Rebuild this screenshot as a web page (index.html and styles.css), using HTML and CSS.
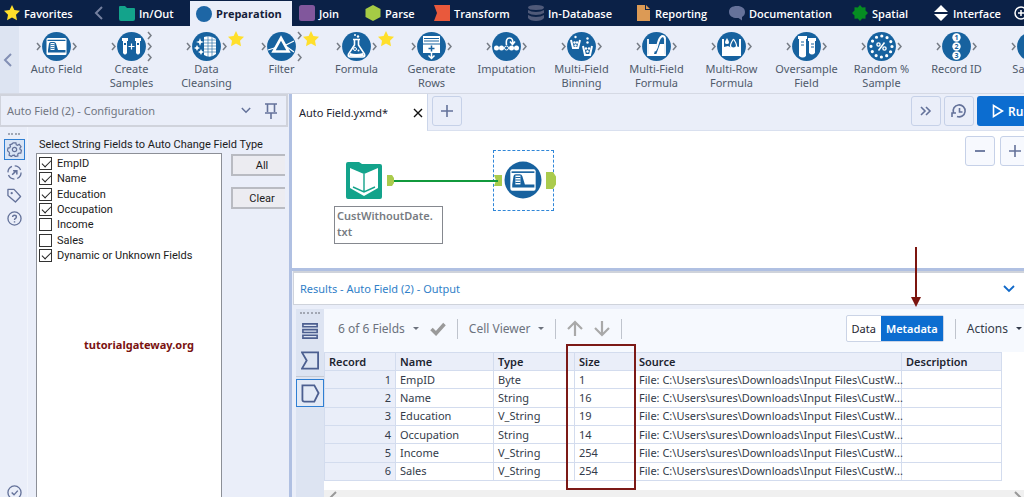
FILE: index.html
```html
<!DOCTYPE html>
<html lang="en">
<head>
    <meta charset="UTF-8">
    <meta name="viewport" content="width=device-width, initial-scale=1.0">
    <title>Auto Field.yxmd</title>
    <link rel="stylesheet" href="styles.css">
</head>
<body>
    <!-- shared shapes -->
    <svg class="defs" aria-hidden="true">
        <symbol id="star" viewBox="0 0 16 16"><path fill="#ffdf2b" d="M8 0l2.400 5 5.600.8-4 3.900 1 5.600-5-2.700-5 2.700 1-5.600-4-3.900 5.600-.8z"/></symbol>
        <symbol id="disc" viewBox="0 0 75 31">
            <circle cx="37.500" cy="15.500" r="14.400" fill="#17629f"/>
            <path d="M18 12l3 3.500-3 3.500" fill="none" stroke="#777c85" stroke-width="1.500"/>
        </symbol>
        <symbol id="out" viewBox="0 0 75 31"><path d="M54 12l3 3.500-3 3.500" fill="none" stroke="#777c85" stroke-width="1.500"/></symbol>
        <symbol id="out2" viewBox="0 0 75 31"><path d="M54 1l3 3.500-3 3.500M54 23l3 3.500-3 3.500" fill="none" stroke="#777c85" stroke-width="1.500"/></symbol>
        <symbol id="autofield" viewBox="0 0 30 30">
            <rect x="5" y="6.500" width="20" height="17" rx="1.500" fill="#fff"/>
            <path d="M6 8.800h18" stroke="#17629f" stroke-width="1.300"/>
            <path fill="#17629f" d="M6.500 21V18.500L7.500 12q.3-1.500 1.800-1.500h3.200q1.500 0 2 1.500l2 6.500H24V21z"/>
            <path fill="#fff" d="M9 11.500h4v7H9z"/>
            <path d="M9 13h4M9 15h4M9 17h4" stroke="#17629f" stroke-width=".8"/>
        </symbol>
    </svg>

    <nav class="palette">
        <button class="palette-tab"><svg class="icon" viewBox="0 0 16 16"><use href="#star"/></svg>Favorites</button>
        <button class="palette-back" aria-label="Previous"><svg width="9" height="14" viewBox="0 0 9 14"><path d="M8 1L2 7l6 6" fill="none" stroke="#75809f" stroke-width="2"/></svg></button>
        <button class="palette-tab"><svg class="icon" viewBox="0 0 16 16"><path fill="#13a38b" d="M0 2q0-1 1-1h5l2 2h7q1 0 1 1v10q0 2-2 2H2q-2 0-2-2z"/></svg>In/Out</button>
        <button class="palette-tab active"><svg class="icon" viewBox="0 0 16 16"><circle cx="8" cy="8" r="8" fill="#1d66a5"/></svg>Preparation</button>
        <button class="palette-tab"><svg class="icon" viewBox="0 0 16 16"><rect width="16" height="16" rx="2.500" fill="#81579c"/></svg>Join</button>
        <button class="palette-tab"><svg class="icon" viewBox="0 0 16 16"><path fill="#a5cb45" d="M8 0l7.500 4v8L8 16 .5 12V4z"/></svg>Parse</button>
        <button class="palette-tab"><svg class="icon" viewBox="0 0 16 16"><path fill="#e9593c" d="M0 0h16v16H0l3-8z"/></svg>Transform</button>
        <button class="palette-tab"><svg class="icon" viewBox="0 0 16 16"><g fill="#505a79"><path d="M0 2.500q0-2.500 8-2.500t8 2.500-8 2.500-8-2.500"/><path d="M0 5q3 2 8 2t8-2v3q-3 2-8 2T0 8z"/><path d="M0 10q3 2 8 2t8-2v3q-2 3-8 3t-8-3z"/></g></svg>In-Database</button>
        <button class="palette-tab"><svg class="icon" viewBox="0 0 16 16"><path fill="#dc9a55" d="M2 0h8v5h5v11H2z"/><path fill="#dc9a55" d="M11 0l4 4h-4z"/></svg>Reporting</button>
        <button class="palette-tab"><svg class="icon" viewBox="0 0 16 16"><path fill="#66729a" d="M8 1c5 0 8 2.500 8 6 0 2-1 4-3 5v3.500L9.500 13C4 13.500 0 11 0 7s3-6 8-6"/></svg>Documentation</button>
        <button class="palette-tab"><svg class="icon" viewBox="0 0 16 16"><path fill="#068d22" d="M8 0l2.200 2.500 3.300-.3v3.300L16 8l-2.500 2.500v3.300l-3.300-.3L8 16l-2.200-2.500-3.300.3v-3.300L0 8l2.500-2.500V2.200l3.300.3z"/></svg>Spatial</button>
        <button class="palette-tab"><svg class="icon" viewBox="0 0 16 16"><path fill="#fff" d="M8 0l7 7H1zM8 16l7-7H1z"/></svg>Interface</button>
        <button class="palette-tab" aria-label="Add"><svg class="icon" viewBox="0 0 16 16"><circle cx="8" cy="8" r="6" fill="none" stroke="#fff" stroke-width="1.500"/><path d="M5 8h6M8 5v6" stroke="#fff" stroke-width="1.500"/></svg></button>
    </nav>

    <div class="tools">
        <button class="tools-prev" aria-label="Scroll left"><svg width="9" height="14" viewBox="0 0 9 14"><path d="M8 1L2 7l6 6" fill="none" stroke="#8390b5" stroke-width="2"/></svg></button>
        <button class="tool">
            <svg class="tool-icon" viewBox="0 0 75 31"><use href="#disc"/><use href="#out"/><use href="#autofield" x="22.500" y="0.500" width="30" height="30"/></svg>
            Auto Field
        </button>
        <button class="tool">
            <svg class="tool-icon" viewBox="0 0 75 31"><use href="#disc"/><use href="#out"/><use href="#out2"/>
                <path fill="#fff" d="M28 7h6v3h-6zM29 10h4v12q-2 3-4 0zM41 7h6v3h-6zM42 10h4v12q-2 3-4 0z"/>
                <path d="M34.500 15.500h6M37.500 12.500v6" stroke="#fff" stroke-width="1.200"/><path d="M30 13h2M43 13h2" stroke="#17629f" stroke-width="2"/></svg>
            Create Samples
        </button>
        <button class="tool">
            <svg class="tool-icon" viewBox="0 0 75 31"><use href="#disc"/><use href="#out"/><use href="#star" x="59" y="0" width="16" height="16"/>
                <path fill="#fff" d="M35 6q7-2 12 2v15q-6 5-12 1z"/>
                <path d="M35 9h12M35 12h12M35 15h12M35 18h12M35 21h12M39 5v21M43 6v20" stroke="#17629f" stroke-width=".6"/>
                <path fill="#fff" d="M31 7l1 3 3 1-3 1-1 3-1-3-3-1 3-1zM28 14l1 2 2 1-2 1-1 2-1-2-2-1 2-1zM32 18l1 2 2 1-2 1-1 2-1-2-2-1 2-1z"/></svg>
            Data Cleansing
        </button>
        <button class="tool">
            <svg class="tool-icon" viewBox="0 0 75 31"><use href="#disc"/><use href="#out2"/><use href="#star" x="59" y="0" width="16" height="16"/>
                <path d="M37 7l7.500 13.500h-15z" fill="none" stroke="#fff" stroke-width="2.600"/>
                <path d="M24 19l8-2.500M42 14l8-4M43 16l7 5" stroke="#fff" stroke-width="1.300"/></svg>
            Filter
        </button>
        <button class="tool">
            <svg class="tool-icon" viewBox="0 0 75 31"><use href="#disc"/><use href="#out"/><use href="#star" x="59" y="0" width="16" height="16"/>
                <path d="M34 8.500h7M35.500 9v5l-6 9q-1 3 2 3h12q3 0 2-3l-6-9V9" fill="none" stroke="#fff" stroke-width="1.600"/>
                <path fill="#fff" d="M31 22q6 2 13 0l1 3q-7 2-15 0z"/><circle cx="36" cy="18" r="1.500" fill="none" stroke="#fff"/><circle cx="39.500" cy="19.500" r="1" fill="#fff"/><circle cx="36" cy="4" r="1" fill="#fff"/><circle cx="39" cy="5.500" r="1.200" fill="#fff"/></svg>
            Formula
        </button>
        <button class="tool">
            <svg class="tool-icon" viewBox="0 0 75 31"><use href="#disc"/><use href="#out"/>
                <path fill="#fff" d="M29 5h17v17H29z"/><path d="M30 7.500h15M30 10h15M29 13h17" stroke="#17629f" stroke-width="1"/><path d="M34.500 17.500h6M37.500 14.500v6" stroke="#17629f" stroke-width="1.500"/>
                <path d="M37.500 22v5M34.500 24.500l3 3 3-3" fill="none" stroke="#fff" stroke-width="1.500"/></svg>
            Generate Rows
        </button>
        <button class="tool">
            <svg class="tool-icon" viewBox="0 0 75 31"><use href="#disc"/><use href="#out"/>
                <g fill="#fff"><circle cx="27.500" cy="17" r="2.500"/><circle cx="32.500" cy="17" r="2.500"/><circle cx="42.500" cy="17" r="2.500"/><circle cx="47.500" cy="17" r="2.500"/></g>
                <circle cx="37.500" cy="17" r="2" fill="none" stroke="#fff"/>
                <path d="M37.500 14q-1-7 3-7t3 6M41 10.500l2.500 3 2.500-3" fill="none" stroke="#fff" stroke-width="1.600"/></svg>
            Imputation
        </button>
        <button class="tool">
            <svg class="tool-icon" viewBox="0 0 75 31"><use href="#disc"/><use href="#out"/>
                <path d="M27 9l2 8h5l2-8M39 15l2 9h5l2-9" fill="none" stroke="#fff" stroke-width="2"/>
                <g fill="#fff"><circle cx="30.500" cy="11.500" r="1.200"/><circle cx="33" cy="11.500" r="1.200"/><circle cx="31.500" cy="14.500" r="1.200"/><circle cx="31.500" cy="6" r="1.200"/><circle cx="42" cy="17.500" r="1.200"/><circle cx="45" cy="17.500" r="1.200"/><circle cx="43.500" cy="20.500" r="1.200"/><circle cx="43.500" cy="11.500" r="1.200"/><circle cx="43.500" cy="7.500" r="1.200"/></g></svg>
            Multi-Field Binning
        </button>
        <button class="tool">
            <svg class="tool-icon" viewBox="0 0 75 31"><use href="#disc"/><use href="#out"/>
                <path d="M29 8v16h17V8" fill="none" stroke="#fff" stroke-width="1.800"/><path fill="#fff" d="M30 13h8l-3 10h-5zM41 13h4v11h-8z"/>
                <path d="M36 20q2-3 3-8t4-7q3 0 3 3" fill="none" stroke="#fff" stroke-width="2"/></svg>
            Multi-Field Formula
        </button>
        <button class="tool">
            <svg class="tool-icon" viewBox="0 0 75 31"><use href="#disc"/><use href="#out"/>
                <path fill="#fff" d="M28 8h2v8l4-1 4 2 4-2 3 1V8h2v17H28z"/><path fill="#fff" d="M33 7q4 6 0 6t0-6"/><path d="M39.500 8q6 9 0 9t0-9" fill="#17629f" stroke="#fff" stroke-width="1.200"/></svg>
            Multi-Row Formula
        </button>
        <button class="tool">
            <svg class="tool-icon" viewBox="0 0 75 31"><use href="#disc"/><use href="#out"/>
                <path fill="#fff" d="M29 5h9v3h-9zM30 8h7v17q-3 3-7 0zM39 7h8v3h-8zM40 10h6v12q-3 3-6 0z"/><path d="M32 11h3M32 14h3M42 13h3M42 16h3" stroke="#17629f" stroke-width="1.200"/></svg>
            Oversample Field
        </button>
        <button class="tool">
            <svg class="tool-icon" viewBox="0 0 75 31"><use href="#disc"/><use href="#out"/>
                <circle cx="37.500" cy="15.500" r="10.500" fill="none" stroke="#fff" stroke-width="3.200" stroke-linecap="round" stroke-dasharray="0 5.498"/>
                <path d="M34.500 19.500l6-8" stroke="#fff" stroke-width="1.500"/><circle cx="34.500" cy="13.500" r="1.600" fill="none" stroke="#fff" stroke-width="1.400"/><circle cx="40.500" cy="17.500" r="1.600" fill="none" stroke="#fff" stroke-width="1.400"/></svg>
            Random % Sample
        </button>
        <button class="tool">
            <svg class="tool-icon" viewBox="0 0 75 31"><use href="#disc"/><use href="#out"/>
                <g fill="#fff"><circle cx="37.500" cy="6.500" r="4.200"/><circle cx="37.500" cy="15.500" r="4.200"/><circle cx="37.500" cy="24.500" r="4.200"/></g>
                <g class="id-digits"><text x="37.500" y="9">1</text><text x="37.500" y="18">2</text><text x="37.500" y="27">3</text></g></svg>
            Record ID
        </button>
        <button class="tool">
            <svg class="tool-icon" viewBox="0 0 75 31"><use href="#disc"/></svg>
            Sample
        </button>
    </div>

    <div class="workspace">
        <aside class="config">
            <header class="config-head">
                <h2>Auto Field (2) - Configuration</h2>
                <button aria-label="Collapse"><svg width="10" height="7" viewBox="0 0 12 8"><path d="M1 1l5 5 5-5" fill="none" stroke="#64729a" stroke-width="1.800"/></svg></button>
                <button aria-label="Pin"><svg width="14" height="16" viewBox="0 0 14 16"><path d="M1 1h12M3.500 1v8M10.500 1v8M1 10h12M7 10v6" fill="none" stroke="#64729a" stroke-width="1.600"/></svg></button>
            </header>
            <div class="config-body">
                <div class="config-rail">
                    <span class="grip"></span>
                    <button class="selected" aria-label="Configuration"><svg viewBox="0 0 16 16"><path d="M6.500 1h3l.4 2 1.500.6L13 2.500 15 5l-1.300 1.600.3 1.400 1.500.8-.8 3-2 .1-1.200 1 .1 2-3 .6L8 14l-2 .3-1.300 1.200-2.500-1.500.5-2L2 10.500.5 9.500l.5-3 2-.4.7-1.400L3 3l2.500-1z" fill="none" stroke="#64729a" stroke-width="1.300"/><circle cx="8" cy="8" r="2.300" fill="none" stroke="#64729a" stroke-width="1.300"/></svg></button>
                    <button aria-label="Navigation"><svg viewBox="0 0 16 16"><circle cx="8" cy="8" r="7" fill="none" stroke="#64729a" stroke-width="1.400" stroke-dasharray="8 3"/><path d="M5.500 10.500l4.500-4.500M6.500 6h4v4" fill="none" stroke="#64729a" stroke-width="1.600"/></svg></button>
                    <button aria-label="Annotation"><svg viewBox="0 0 16 16"><path d="M1 1.500h6.500l7 7.500-5.500 6L1 8z" fill="none" stroke="#64729a" stroke-width="1.400" stroke-linejoin="round"/><circle cx="5" cy="5.500" r="1.200" fill="#64729a"/></svg></button>
                    <button aria-label="Help"><svg viewBox="0 0 16 16"><circle cx="8" cy="8" r="7" fill="none" stroke="#64729a" stroke-width="1.400"/><path d="M6 6.500q0-2 2-2t2 1.800q0 1-1 1.500T8 9.500M8 10.800v1.400" fill="none" stroke="#64729a" stroke-width="1.500"/></svg></button>
                    <button class="status" aria-label="Status"><svg viewBox="0 0 16 16"><circle cx="8" cy="8" r="7" fill="none" stroke="#64729a" stroke-width="1.400"/><path d="M5 8l2.500 2.500L11.500 6" fill="none" stroke="#64729a" stroke-width="1.500"/></svg></button>
                </div>
                <div class="config-form">
                    <h3 id="fields-title">Select String Fields to Auto Change Field Type</h3>
                    <div class="config-row">
                        <div class="field-box" role="group" aria-labelledby="fields-title">
                            <div class="field-list">
                                <label><input type="checkbox" checked>EmpID</label>
                                <label><input type="checkbox" checked>Name</label>
                                <label><input type="checkbox" checked>Education</label>
                                <label><input type="checkbox" checked>Occupation</label>
                                <label><input type="checkbox">Income</label>
                                <label><input type="checkbox">Sales</label>
                                <label><input type="checkbox" checked>Dynamic or Unknown Fields</label>
                            </div>
                            <p class="watermark">tutorialgateway.org</p>
                        </div>
                        <div class="field-actions">
                            <button>All</button>
                            <button>Clear</button>
                        </div>
                    </div>
                </div>
            </div>
        </aside>

        <main class="main">
            <div class="file-bar">
                <div class="file-tab">
                    <span>Auto Field.yxmd*</span>
                    <button aria-label="Close"><svg width="10" height="10" viewBox="0 0 10 10"><path d="M1 1l8 8M9 1L1 9" stroke="#111" stroke-width="1.400"/></svg></button>
                </div>
                <div class="file-actions">
                    <button class="square" aria-label="New workflow"><svg width="14" height="14" viewBox="0 0 14 14"><path d="M1 7h12M7 1v12" stroke="#64729a" stroke-width="1.600"/></svg></button>
                    <button class="square push" aria-label="More"><svg width="12" height="10" viewBox="0 0 12 10"><path d="M1 1l4 4-4 4M6 1l4 4-4 4" fill="none" stroke="#64729a" stroke-width="1.600"/></svg></button>
                    <button class="square" aria-label="Schedule"><svg width="16" height="16" viewBox="0 0 16 16"><path d="M2.500 10A6 6 0 1 1 6 13.500M1 14v-4h4M8.500 5v4h3" fill="none" stroke="#64729a" stroke-width="1.600"/></svg></button>
                    <button class="run"><svg width="12" height="14" viewBox="0 0 12 14"><path d="M1.500 1.500v11l9-5.500z" fill="none" stroke="#fff" stroke-width="1.600"/></svg>Run</button>
                </div>
            </div>

            <section class="canvas">
                <div class="zoom">
                    <button class="square" aria-label="Zoom out"><svg width="14" height="14" viewBox="0 0 14 14"><path d="M2 7h10" stroke="#64729a" stroke-width="1.800"/></svg></button>
                    <button class="square" aria-label="Zoom in"><svg width="14" height="14" viewBox="0 0 14 14"><path d="M1 7h12M7 1v12" stroke="#64729a" stroke-width="1.600"/></svg></button>
                </div>
                <svg class="node input-node" viewBox="0 0 48 37">
                    <path fill="#13a38b" d="M0 2q0-2 2-2h11l3 2h18q2 0 2 2v31q0 2-2 2H2q-2 0-2-2z"/>
                    <path fill="#fff" d="M4 6l14 6 14-6v20l-14 8-14-8z"/>
                    <path d="M18 12v17M7 25l11 5 11-5" fill="none" stroke="#13a38b" stroke-width="1.400"/>
                    <path fill="#aacb4d" d="M41 13h5l2 3v5l-2 3h-5z"/>
                </svg>
                <div class="node auto-node">
                    <svg width="62" height="60" viewBox="0 0 62 60">
                        <path fill="#aacb4d" d="M0 24h8v11H0l2-5.500zM52 21h7l4 6v5l-4 6h-7z"/>
                        <circle cx="29" cy="29" r="18.500" fill="#17629f"/>
                        <use href="#autofield" x="10" y="10" width="38" height="38"/>
                    </svg>
                </div>
                <span class="wire"></span>
                <p class="node caption">CustWithoutDate.<br>txt</p>
            </section>

            <section class="results">
                <header class="results-head">
                    <h2>Results - Auto Field (2) - Output</h2>
                    <button aria-label="Collapse results"><svg width="12" height="8" viewBox="0 0 12 8"><path d="M1 1l5 5 5-5" fill="none" stroke="#1069c9" stroke-width="1.800"/></svg></button>
                </header>
                <div class="results-body">
                    <div class="results-rail">
                        <span class="grip wide"></span>
                        <button aria-label="Messages"><svg viewBox="0 0 20 20"><path d="M2 2h15v3H2zM2 8h15v3H2zM2 14h15v3H2z" fill="none" stroke="#4c5f90" stroke-width="1.700"/></svg></button>
                        <button aria-label="Input anchor"><svg viewBox="0 0 20 20"><path d="M1 1.500h17v17H1l5-8.500z" fill="none" stroke="#4c5f90" stroke-width="1.900"/></svg></button>
                        <hr>
                        <button class="selected" aria-label="Output anchor"><svg viewBox="0 0 20 20"><path d="M1.500 1.500H14l4.500 8-4.500 9H3.500q-2 0-2-2z" fill="none" stroke="#4c5f90" stroke-width="1.900"/></svg></button>
                    </div>
                    <div class="results-content">
                        <div class="results-bar">
                            <button class="menu">6 of 6 Fields<i class="caret"></i></button>
                            <button class="check" aria-label="Apply"><svg width="16" height="14" viewBox="0 0 16 14"><path d="M1.500 7l4.500 4.500L14.500 2" fill="none" stroke="#9a9a9a" stroke-width="3.500"/></svg></button>
                            <span class="rule"></span>
                            <button class="menu">Cell Viewer<i class="caret"></i></button>
                            <span class="rule"></span>
                            <button aria-label="Up"><svg width="16" height="17" viewBox="0 0 16 17"><path d="M8 16V2M1 9l7-7 7 7" fill="none" stroke="#a9a9a9" stroke-width="2.200"/></svg></button>
                            <button aria-label="Down"><svg width="16" height="17" viewBox="0 0 16 17"><path d="M8 1v14M1 8l7 7 7-7" fill="none" stroke="#a9a9a9" stroke-width="2.200"/></svg></button>
                            <span class="rule"></span>
                            <div class="view-switch">
                                <button>Data</button>
                                <button class="on">Metadata</button>
                                <svg class="pointer" width="10" height="60" viewBox="0 0 10 60"><path d="M5 0v52" stroke="#7c150f" stroke-width="2"/><path d="M0 50h10L5 60z" fill="#7c150f"/></svg>
                            </div>
                            <span class="rule"></span>
                            <button class="menu actions">Actions<i class="caret"></i></button>
                        </div>
                        <div class="table-wrap">
                            <table class="meta">
                                <colgroup><col class="c-record"><col class="c-name"><col class="c-type"><col class="c-size"><col class="c-source"><col class="c-desc"></colgroup>
                                <thead>
                                    <tr><th>Record</th><th>Name</th><th>Type</th><th>Size</th><th>Source</th><th>Description</th></tr>
                                </thead>
                                <tbody>
                                    <tr><td>1</td><td>EmpID</td><td>Byte</td><td>1</td><td>File: C:\Users\sures\Downloads\Input Files\CustW...</td><td></td></tr>
                                    <tr><td>2</td><td>Name</td><td>String</td><td>16</td><td>File: C:\Users\sures\Downloads\Input Files\CustW...</td><td></td></tr>
                                    <tr><td>3</td><td>Education</td><td>V_String</td><td>19</td><td>File: C:\Users\sures\Downloads\Input Files\CustW...</td><td></td></tr>
                                    <tr><td>4</td><td>Occupation</td><td>String</td><td>14</td><td>File: C:\Users\sures\Downloads\Input Files\CustW...</td><td></td></tr>
                                    <tr><td>5</td><td>Income</td><td>V_String</td><td>254</td><td>File: C:\Users\sures\Downloads\Input Files\CustW...</td><td></td></tr>
                                    <tr><td>6</td><td>Sales</td><td>V_String</td><td>254</td><td>File: C:\Users\sures\Downloads\Input Files\CustW...</td><td></td></tr>
                                </tbody>
                            </table>
                            <span class="highlight"></span>
                        </div>
                        <div class="scrollbar"><svg width="8" height="12" viewBox="0 0 8 12"><path d="M7 1L2 6l5 5" fill="none" stroke="#999" stroke-width="2"/></svg><svg width="8" height="12" viewBox="0 0 8 12"><path d="M1 1l5 5-5 5" fill="none" stroke="#999" stroke-width="2"/></svg></div>
                    </div>
                </div>
            </section>
        </main>
    </div>
</body>
</html>
```

FILE: styles.css
```css
* {
    box-sizing: border-box;
}

body {
    display: flex;
    flex-direction: column;
    height: 100vh;
    margin: 0;
    overflow: hidden;
    background: #eaeef9;
    color: #333b4a;
    font-family: "Noto Sans", sans-serif;
    font-size: 11px;
}

button {
    display: flex;
    align-items: center;
    justify-content: center;
    margin: 0;
    padding: 0;
    border: none;
    background: none;
    color: inherit;
    font: inherit;
    cursor: pointer;
}

svg {
    display: block;
    flex: none;
}

h2, h3, p {
    margin: 0;
    font-size: 11px;
    font-weight: normal;
}

.defs {
    position: absolute;
    width: 0;
    height: 0;
}

/* category tabs */
.palette {
    display: grid;
    grid-template-columns: 81px 34px 75px 102px 66px 69px 94px 107px 94px 123px 81px 80px 30px;
    flex: none;
    height: 26px;
    background: #0b2147;
    color: #fff;
    font-family: "Open Sans", "Noto Sans", sans-serif;
}

.palette-tab {
    justify-content: flex-start;
    gap: 4px;
    padding-left: 4px;
    white-space: nowrap;
    font-weight: 600;
}

.palette-tab.active {
    margin-top: 1px;
    padding-left: 6px;
    background: #eaeef9;
    color: #14203a;
    font-weight: 700;
}

.active ~ .palette-tab {
    padding-left: 7px;
}

.icon {
    width: 16px;
    height: 16px;
}

/* tool strip */
.tools {
    display: flex;
    flex: none;
    height: 68px;
    border-bottom: 1px solid #d5d9e4;
    overflow: hidden;
}

.tools-prev {
    flex: none;
    width: 19px;
    padding-right: 5px;
    background: #dde4f2;
}

.tool {
    flex: none;
    flex-direction: column;
    justify-content: flex-start;
    width: 75px;
    padding: 5px 8px 0;
    color: #4f5a6b;
    line-height: 14px;
}

.tool-icon {
    width: 75px;
    height: 31px;
}

.id-digits {
    fill: #17629f;
    font-size: 7px;
    font-weight: 700;
    text-anchor: middle;
}

.workspace {
    display: flex;
    flex: 1;
    min-height: 0;
}

/* configuration panel */
.config {
    display: flex;
    flex-direction: column;
    flex: none;
    width: 292px;
    border-right: 3px solid #b0c0e2;
}

.config-head {
    display: flex;
    align-items: center;
    gap: 13px;
    height: 33px;
    margin-right: 1px;
    padding: 0 8px 0 6px;
    border: 2px solid #d0d3dc;
    border-left-width: 1px;
    color: #717681;
}

.config-head h2 {
    flex: 1;
}

.config-body {
    display: flex;
    flex: 1;
    min-height: 0;
}

.config-rail {
    display: flex;
    flex-direction: column;
    align-items: center;
    gap: 2px;
    width: 28px;
    padding: 6px 0 0 1px;
    border-right: 1px solid #f2f5fc;
}

.config-rail button {
    width: 21px;
    height: 21px;
}

.config-rail svg {
    width: 15px;
    height: 15px;
}

.config-rail .selected {
    border: 1px solid #2f7fd3;
    background: #d9e4f5;
}

.config-rail .status {
    margin-top: auto;
    margin-bottom: -6px;
}

.grip {
    width: 12px;
    height: 4px;
    border-top: 2px dotted #a2a7b3;
}

.grip.wide {
    width: 20px;
}

.config-form {
    display: flex;
    flex-direction: column;
    flex: 1;
    padding: 10px 4px 0 8px;
    color: #1b1b1b;
    font-family: Roboto, "Liberation Sans", sans-serif;
}

.config-form h3 {
    padding-left: 3px;
    line-height: 16px;
}

.config-row {
    display: flex;
    flex: 1;
    gap: 9px;
}

.field-box {
    width: 186px;
    border: 1px solid #8c8f97;
    border-bottom: none;
    background: #fff;
}

.field-list {
    display: grid;
    grid-auto-rows: 1fr;
    height: 109px;
    padding: 2px 2px 0;
}

.field-list label {
    display: flex;
    align-items: center;
    gap: 5px;
}

.field-list input {
    appearance: none;
    position: relative;
    width: 13px;
    height: 13px;
    margin: 0;
    border: 1px solid #333;
    background: #fff;
}

.field-list input:checked::after {
    content: "";
    position: absolute;
    left: 2px;
    top: 2px;
    width: 8px;
    height: 4px;
    border: solid #222;
    border-width: 0 0 1px 1px;
    transform: rotate(-45deg);
}

.watermark {
    margin-top: 74px;
    padding-left: 20px;
    color: #7a1210;
    font-family: "Noto Sans", sans-serif;
    font-weight: 700;
    text-align: center;
}

.field-actions {
    display: flex;
    flex-direction: column;
    flex: 1;
    gap: 11px;
    padding-top: 1px;
}

.field-actions button {
    height: 22px;
    padding-left: 6px;
    border: 2px solid #b9bbc2;
    border-right: none;
    background: #ececf1;
}

/* workflow */
.main {
    display: flex;
    flex-direction: column;
    flex: 1;
    min-width: 0;
}

.file-bar {
    display: flex;
    flex: none;
    height: 37px;
}

.file-tab {
    display: flex;
    align-items: center;
    justify-content: space-between;
    flex: none;
    width: 135px;
    padding: 0 4px 0 7px;
    background: #fff;
    color: #1d2430;
}

.file-actions {
    display: flex;
    flex: 1;
    gap: 3px;
    min-width: 0;
    padding: 2px 0 0 4px;
    border-left: 1px solid #ccd6ea;
    border-bottom: 1px solid #d9e0ef;
}

.square {
    flex: none;
    width: 30px;
    height: 30px;
    border: 1px solid #c6d1e8;
    border-radius: 3px;
}

.push {
    margin-left: auto;
}

.run {
    flex: none;
    justify-content: flex-start;
    gap: 4px;
    width: 47px;
    height: 30px;
    padding-left: 15px;
    border-radius: 3px 0 0 3px;
    background: #0c6dd0;
    color: #fff;
    font-size: 12px;
    font-weight: 600;
    overflow: hidden;
}

.canvas {
    position: relative;
    flex: none;
    height: 137px;
    background: #fff;
    overflow: hidden;
}

.zoom {
    display: flex;
    justify-content: flex-end;
    gap: 5px;
    margin-right: -6px;
    padding-top: 5px;
}

.zoom .square {
    background: #f7f9fe;
}

.node {
    position: absolute;
}

.input-node {
    left: 54px;
    top: 31px;
    width: 48px;
    height: 37px;
}

.wire {
    position: absolute;
    left: 102px;
    top: 49px;
    width: 104px;
    height: 2px;
    background: #11993c;
}

.auto-node {
    left: 201px;
    top: 19px;
    width: 61px;
    height: 61px;
    border: 1px dashed #2f86d8;
}

.caption {
    left: 42px;
    top: 75px;
    width: 109px;
    padding: 1px 2px 3px;
    border: 1px solid #85888f;
    color: #777b82;
    font-weight: 600;
    line-height: 16px;
}

/* results */
.results {
    display: flex;
    flex-direction: column;
    flex: 1;
    min-height: 0;
    border-top: 3px solid #b0c0e2;
}

.results-head {
    display: flex;
    flex: none;
    align-items: center;
    justify-content: space-between;
    height: 34px;
    margin-left: 1px;
    padding: 0 9px 0 6px;
    border: solid #cfd3db;
    border-width: 2px 0 1px 1px;
    background: #fff;
    color: #3080c8;
}

.results-body {
    display: flex;
    flex: 1;
    min-height: 0;
    padding: 4px 0 0 4px;
}

.results-rail {
    display: flex;
    flex-direction: column;
    align-items: center;
    flex: none;
    gap: 1px;
    width: 28px;
    padding-top: 3px;
    background: #dde4f2;
}

.results-rail button {
    width: 28px;
    height: 28px;
}

.results-rail svg {
    width: 19px;
    height: 19px;
}

.results-rail hr {
    width: 100%;
    height: 1px;
    margin: 1px 0;
    border: none;
    background: #c5c9d2;
}

.results-rail .selected {
    border: 1px solid #2f7fd3;
    background: #e3eaf6;
}

.results-content {
    display: flex;
    flex-direction: column;
    flex: 1;
    min-width: 0;
    background: #fff;
}

.results-bar {
    display: flex;
    flex: none;
    align-items: center;
    gap: 11px;
    height: 43px;
    padding: 0 2px 4px 14px;
    background: #f6f9fe;
    color: #6c727d;
}

.results-bar .menu {
    gap: 8px;
    font-size: 12px;
    white-space: nowrap;
}

.results-bar .actions {
    color: #333b4a;
}

.caret {
    border: 3px solid transparent;
    border-top-color: currentColor;
    border-bottom: none;
}

.rule {
    width: 1px;
    height: 20px;
    background: #bfc4cd;
}

.view-switch {
    position: relative;
    display: flex;
    height: 27px;
    margin-left: auto;
    border: 1px solid #cbd4e6;
    border-radius: 2px;
    background: #fff;
    color: #1d2430;
}

.view-switch button {
    padding: 0 5px;
}

.view-switch .on {
    background: #0c6dd0;
    color: #fff;
    font-weight: 600;
}

.pointer {
    position: absolute;
    right: 22px;
    bottom: 34px;
}

.table-wrap {
    position: relative;
    flex: 1;
}

.meta {
    width: 677px;
    height: 129px;
    border-collapse: collapse;
    table-layout: fixed;
}

.c-record { width: 71px; }
.c-name { width: 98px; }
.c-type { width: 81px; }
.c-size { width: 60px; }
.c-source { width: 267px; }
.c-desc { width: 100px; }

.meta th,
.meta td {
    height: 18px;
    padding: 0 0 0 4px;
    border: 1px solid #d3dcee;
    line-height: 16px;
    text-align: left;
    white-space: nowrap;
}

.meta th {
    background: #eaeef9;
    color: #1d2430;
    font-weight: 600;
}

.meta td:first-child {
    padding-right: 4px;
    background: #eaeef9;
    text-align: right;
}

.highlight {
    position: absolute;
    left: 242px;
    top: -8px;
    width: 70px;
    height: 146px;
    border: 2px solid #7c1a17;
}

.scrollbar {
    display: flex;
    justify-content: space-between;
    flex: none;
    height: 7px;
    padding: 1px 2px 0 5px;
    background: #f0f0f0;
    overflow: hidden;
}
```
